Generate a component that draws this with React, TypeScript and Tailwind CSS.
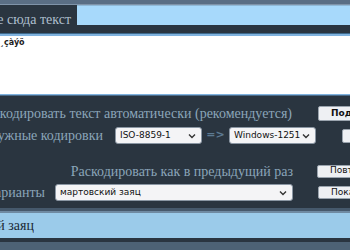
import React from "react";

const serif = { fontFamily: '"Liberation Serif", "DejaVu Serif", serif' };
const sans = { fontFamily: '"DejaVu Sans", "Liberation Sans", sans-serif' };

function Select({ w, children }: { w: string; children: React.ReactNode }) {
  return (
    <div
      className={`${w} shrink-0 h-[17px] flex items-center justify-between rounded-[3px] border border-[#8a96a3] bg-[#f4f4f6] pl-[4px] pr-[5px] text-[9px] text-[#111]`}
      style={sans}
    >
      <span className="whitespace-nowrap">{children}</span>
      <svg width="8" height="6" viewBox="0 0 8 6" className="shrink-0">
        <path d="M1 1.5 L4 4.5 L7 1.5" stroke="#333" strokeWidth="1.4" fill="none" />
      </svg>
    </div>
  );
}

function Btn({ children, bold = false, h = "h-[13px]" }: { children: React.ReactNode; bold?: boolean; h?: string }) {
  return (
    <div
      className={`${h} w-[60px] shrink-0 flex items-center pl-[12px] rounded-[2px] border border-[#9aa4ae] bg-[#eef0f3] text-[9px] text-[#111] whitespace-nowrap overflow-hidden ${bold ? "font-bold" : ""}`}
      style={sans}
    >
      {children}
    </div>
  );
}

export default function App() {
  return (
    <div className="w-[350px] h-[250px] overflow-hidden bg-[#2a3540] flex flex-col" style={serif}>
      <div className="h-[4px] bg-[#5a6e84] shrink-0" />
      <div className="h-[1px] bg-[#7f93a8] shrink-0" />
      <div className="h-[28px] flex shrink-0">
        <div className="w-[77px] shrink-0 overflow-hidden flex justify-end items-start pt-[4px]">
          <span className="whitespace-nowrap text-[14px] text-[#aebfcd] pr-[6px]">Вставьте сюда текст</span>
        </div>
        <div className="flex-1 h-[20px] bg-[#a7d9fb] border-t border-[#8fb8d6]" />
      </div>
      <div className="h-[1px] bg-[#3f6a8c] shrink-0" />
      <div className="h-[2px] bg-[#7fb2de] shrink-0" />
      <div className="h-[58px] bg-white shrink-0 pt-[3px] text-[8px] leading-none font-bold text-[#222]" style={sans}>
        ¸çàýö
      </div>
      <div className="h-[1px] bg-[#7fb2de] shrink-0" />
      <div className="h-[1px] bg-[#4a6a88] shrink-0" />
      <div className="flex-1 flex flex-col">
        <div className="h-[10px]" />
        <div className="flex items-center h-[15px]">
          <div className="w-[300px] shrink-0 overflow-hidden flex justify-end">
            <span className="whitespace-nowrap text-[14px] text-[#8ba5b9] pr-[8px]">Раскодировать текст автоматически (рекомендуется)</span>
          </div>
          <div className="ml-[18px] shrink-0">
            <Btn bold h="h-[15px]">Подходит</Btn>
          </div>
        </div>
        <div className="h-[6px]" />
        <div className="flex items-center h-[17px]">
          <div className="w-[115px] shrink-0 overflow-hidden flex justify-end">
            <span className="whitespace-nowrap text-[14px] text-[#8ba5b9] pr-[12px]">Выбрать нужные кодировки</span>
          </div>
          <Select w="w-[87px]">ISO-8859-1</Select>
          <span className="w-[27px] shrink-0 text-center text-[11px] text-[#5d7a92] font-bold" style={sans}>=&gt;</span>
          <Select w="w-[87px]">Windows-1251</Select>
          <div className="ml-[26px] shrink-0 h-[14px] w-[20px] rounded-[2px] border border-[#9aa4ae] bg-[#eef0f3]" />
        </div>
        <div className="h-[20px]" />
        <div className="flex items-center h-[14px]">
          <div className="w-[300px] shrink-0 overflow-hidden flex justify-end">
            <span className="whitespace-nowrap text-[14px] text-[#8ba5b9] pr-[7px]">Раскодировать как в предыдущий раз</span>
          </div>
          <div className="ml-[17px] shrink-0">
            <Btn>Повторить</Btn>
          </div>
        </div>
        <div className="h-[6px]" />
        <div className="flex items-start h-[20px]">
          <div className="w-[55px] shrink-0 h-[16px] overflow-hidden flex justify-end items-center">
            <span className="whitespace-nowrap text-[14px] text-[#8ba5b9] pr-[10px]">Другие варианты</span>
          </div>
          <Select w="w-[238px]">мартовский заяц</Select>
          <div className="ml-[25px] mt-[2px] shrink-0">
            <Btn>Показать</Btn>
          </div>
        </div>
      </div>
      <div className="h-[3px] bg-[#46596c] shrink-0" />
      <div className="h-[2px] bg-[#6f8aa2] shrink-0" />
      <div className="h-[25px] bg-[#9bcbea] shrink-0 overflow-hidden flex items-center">
        <div className="w-[34px] overflow-hidden flex justify-end shrink-0">
          <span className="whitespace-nowrap text-[14px] text-[#1c2a36]">Мартовский заяц</span>
        </div>
      </div>
      <div className="h-[4px] bg-[#2a3540] shrink-0" />
      <div className="h-[8px] bg-[#4d6275] shrink-0" />
    </div>
  );
}
